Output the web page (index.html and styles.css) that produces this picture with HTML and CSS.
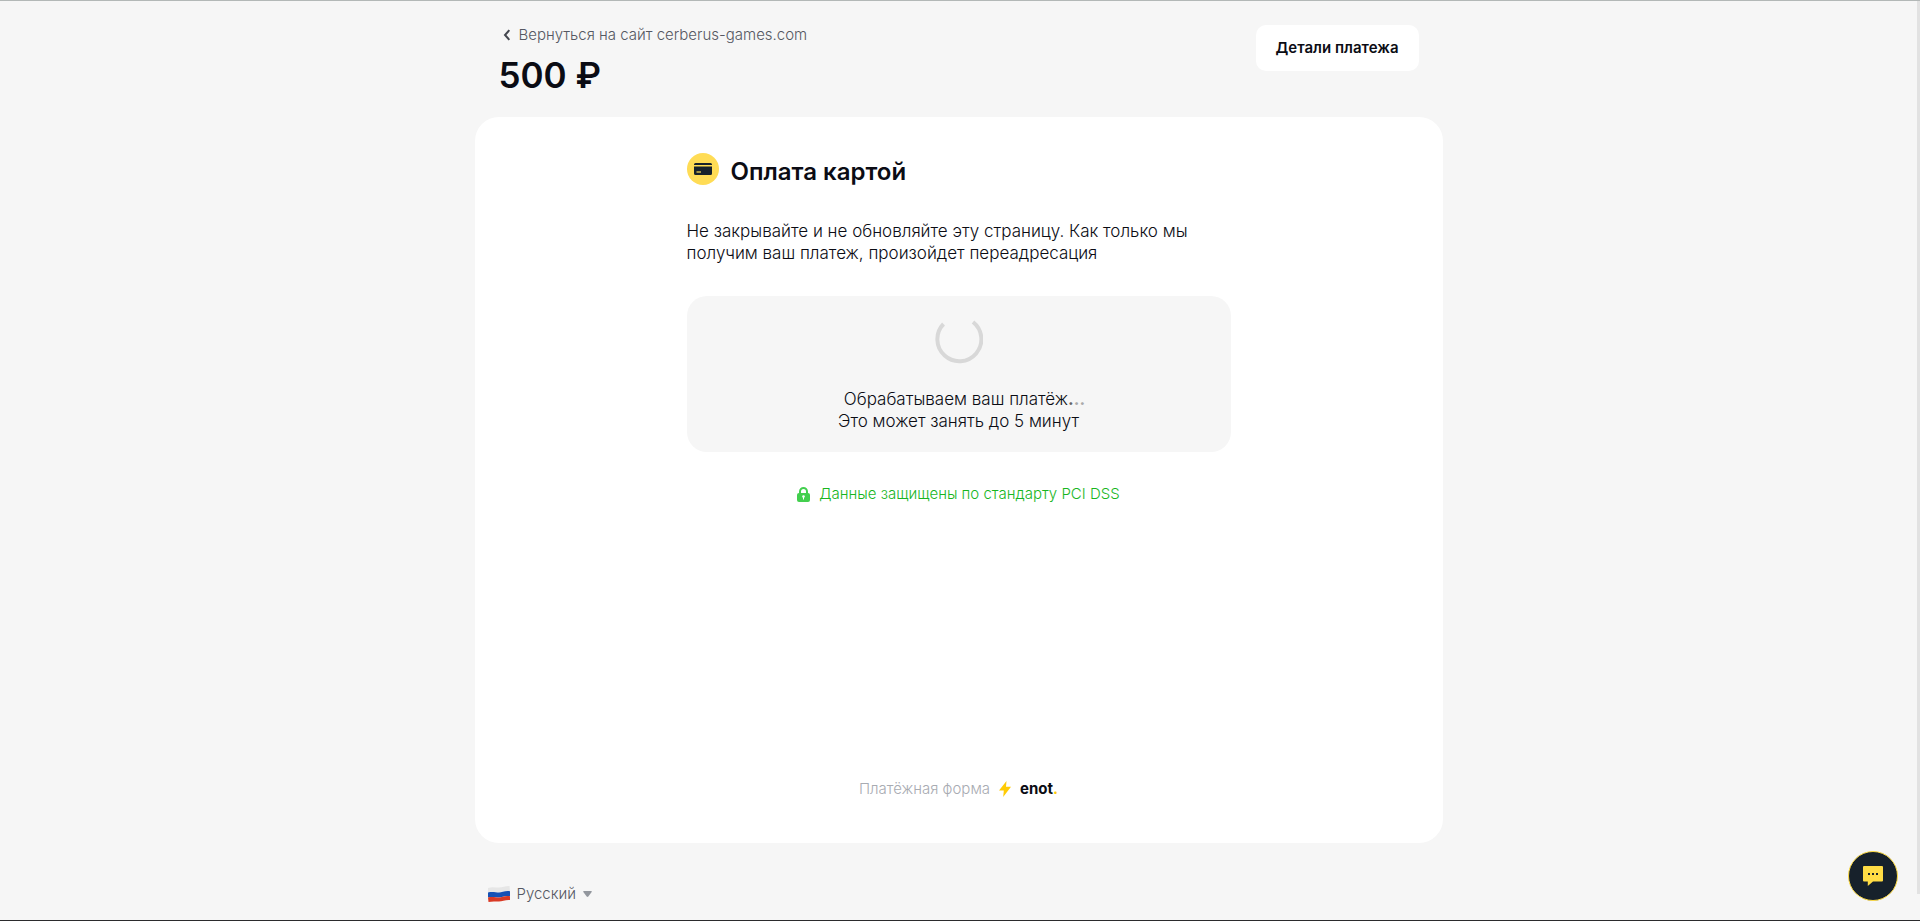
FILE: index.html
```
<!DOCTYPE html>
<html lang="ru">
<head>
<meta charset="utf-8">
<meta name="viewport" content="width=device-width, initial-scale=1">
<title>Оплата картой</title>
<link rel="stylesheet" href="styles.css">
</head>
<body>
<div class="page">
  <header class="header">
    <div class="summary">
      <a class="back" href="#">
        <svg class="back-icon" viewBox="0 0 8 12" aria-hidden="true"><path d="M6.300 1.200 2 6l4.300 4.800" fill="none" stroke="#454850" stroke-width="2"/></svg>
        <span>Вернуться на сайт cerberus-games.com</span>
      </a>
      <div class="amount">500 ₽</div>
    </div>
    <button class="details" type="button">Детали платежа</button>
  </header>

  <main class="card">
    <div class="content">
      <div class="title-row">
        <svg class="card-icon" viewBox="0 0 32 32" aria-hidden="true">
          <circle cx="16" cy="16" r="16" fill="#ffdc55"/>
          <path d="M7 12v-.5A1.500 1.500 0 0 1 8.500 10h15a1.500 1.500 0 0 1 1.500 1.500v.5z" fill="#17212b"/>
          <path d="M7 13.500h18v7a1.500 1.500 0 0 1-1.500 1.500h-15A1.500 1.500 0 0 1 7 20.500z" fill="#17212b"/>
          <path d="M9.500 19h4.500" stroke="#ffdc55" stroke-width="1.200"/>
        </svg>
        <h1 class="title">Оплата картой</h1>
      </div>
      <p class="note">Не закрывайте и не обновляйте эту страницу. Как только мы получим ваш платеж, произойдет переадресация</p>
      <section class="status" role="status">
        <svg class="spinner" viewBox="0 0 48 48" aria-hidden="true"><path d="M8.500 8A22 22 0 1 0 38 6" fill="none" stroke="#d8d8d8" stroke-width="4"/></svg>
        <p class="status-text"><span class="processing">Обрабатываем ваш платёж<span class="dots"><span class="dot dot-dark">.</span><span class="dot">.</span><span class="dot">.</span></span></span><br>Это может занять до 5 минут</p>
      </section>
      <p class="secure">
        <svg class="lock" viewBox="0 0 13 15" aria-hidden="true"><path d="M3 7V4.500a3.500 3.500 0 0 1 7 0V7" fill="none" stroke="#43cf4e" stroke-width="2"/><rect y="6" width="13" height="9" rx="2" fill="#43cf4e"/><circle cx="6.500" cy="9.500" r="1.300" fill="#fff"/><path d="M6.500 10v2.500" stroke="#fff"/></svg>
        <span>Данные защищены по стандарту PCI DSS</span>
      </p>
    </div>
    <footer class="brand">
      <span>Платёжная форма</span>
      <svg class="bolt" viewBox="0 0 12 16" aria-hidden="true"><path d="M7.500 0 7 5.800h5L4.200 16l.6-6.400H0z" fill="#ffcb05"/></svg>
      <span class="logo">enot<span class="logo-dot">.</span></span>
    </footer>
  </main>

  <div class="bottom">
    <button class="language" type="button">
      <svg class="flag" viewBox="0 0 22 16" aria-hidden="true">
        <path d="M0 2C4 .5 8 1.500 11 1.500S17 0 21.500 0L22 5.300c-5-.8-8 1.200-11 1.200S4 5.500 0 6.500z" fill="#e6e6e6"/>
        <path d="M0 6.500C4 5.500 8 6.500 11 6.500s6-2 11-1.200v5c-5-.8-8 1.200-11 1.200s-7-1-11 0z" fill="#1651b5"/>
        <path d="M0 11.500c4-1 8 0 11 0s6-2 11-1.200V14c-4-.5-8 1.500-11 1.500s-7-.5-10.500.5z" fill="#d93a25"/>
      </svg>
      <span>Русский</span>
      <svg class="caret" viewBox="0 0 9 6" aria-hidden="true"><path d="M.8 0h7.400q1 0 .5 1L5.300 5.500q-.8.800-1.600 0L.3 1Q-.2 0 .8 0z" fill="#93979e"/></svg>
    </button>
  </div>
</div>
<div class="scrollbar"></div>
<button class="chat" type="button" aria-label="Чат">
  <svg class="chat-icon" viewBox="0 0 20 20" aria-hidden="true"><path d="M1 0h18a1 1 0 0 1 1 1v13.500a1 1 0 0 1-1 1h-9L4.800 20v-4.500H1a1 1 0 0 1-1-1V1a1 1 0 0 1 1-1z" fill="#ffdc45"/><path d="M5 7h2v2H5zm4 0h2v2H9zm4 0h2v2h-2z" fill="#17212b"/></svg>
</button>
</body>
</html>
```
FILE: styles.css
```
* {
  box-sizing: border-box;
}

body {
  margin: 0;
  min-height: 100vh;
  padding-right: 3px;
  background: #f6f6f6;
  border-top: 1px solid #b3b8b7;
  border-bottom: 1px solid #2b2b2d;
  color: #0b0c14;
  font: 300 17px/22px Inter, "Open Sans", sans-serif;
}

button {
  border: 0;
  font-family: inherit;
  cursor: pointer;
}

h1,
p {
  margin: 0;
}

.page {
  width: 100%;
  max-width: 968px;
  margin: 0 auto;
  padding-top: 24px;
}

.header {
  display: flex;
  justify-content: space-between;
  align-items: flex-start;
  padding: 0 24px 20px;
}

.back {
  display: flex;
  align-items: center;
  gap: 8px;
  padding-left: 4px;
  color: #555862;
  font-size: 15px;
  line-height: 20px;
  text-decoration: none;
}

.back-icon {
  width: 8px;
  height: 12px;
}

.amount {
  font-size: 35px;
  font-weight: 600;
  line-height: 44px;
  margin-top: 8px;
}

.details {
  padding: 12px 20px;
  border-radius: 10px;
  background: #fff;
  color: #0b0c14;
  font-size: 15px;
  font-weight: 600;
  line-height: 22px;
}

.card {
  display: flex;
  flex-direction: column;
  align-items: center;
  justify-content: space-between;
  min-height: 726px;
  padding: 36px 24px 44px;
  border-radius: 24px;
  background: #fff;
}

.content {
  width: 100%;
  max-width: 544px;
}

.title-row {
  display: flex;
  gap: 12px;
}

.card-icon {
  width: 32px;
  height: 32px;
}

.title {
  padding-top: 3px;
  font-size: 24px;
  font-weight: 600;
  line-height: 32px;
}

.note {
  margin-top: 32px;
}

.status {
  display: flex;
  flex-direction: column;
  align-items: center;
  gap: 24px;
  margin-top: 32px;
  padding: 20px;
  border-radius: 20px;
  background: #f6f6f6;
  text-align: center;
}

.spinner {
  width: 48px;
  height: 48px;
}

.processing {
  padding-left: 12px;
}

.dot {
  color: #aaa;
  font-weight: 700;
}

.dot-dark {
  color: #666;
}

.secure {
  display: flex;
  align-items: center;
  justify-content: center;
  gap: 9px;
  margin-top: 32px;
  color: #18b61e;
  font-size: 15px;
  line-height: 20px;
}

.lock {
  width: 13px;
  height: 15px;
}

.brand {
  display: flex;
  align-items: center;
  gap: 9px;
  color: #a8abb2;
  font-size: 15px;
  line-height: 20px;
}

.bolt {
  width: 12px;
  height: 16px;
}

.logo {
  color: #0b0c14;
  font-weight: 700;
}

.logo-dot {
  color: #ffcb05;
}

.bottom {
  padding: 41px 13px 14px;
}

.language {
  display: flex;
  align-items: center;
  gap: 7px;
  padding: 0;
  background: none;
  color: #555862;
  font-size: 15px;
  font-weight: 300;
  line-height: 20px;
}

.flag {
  width: 22px;
  height: 16px;
}

.caret {
  width: 9px;
  height: 6px;
}

.scrollbar {
  position: fixed;
  top: 1px;
  right: 0;
  width: 3px;
  height: 893px;
  background: #e2e2e2;
}

.chat {
  position: fixed;
  right: 22px;
  bottom: 20px;
  display: flex;
  align-items: center;
  justify-content: center;
  width: 50px;
  height: 50px;
  padding: 0;
  border: 1px solid #ffdc45;
  border-radius: 50%;
  background: #17212b;
}

.chat-icon {
  width: 20px;
  height: 20px;
}
```
